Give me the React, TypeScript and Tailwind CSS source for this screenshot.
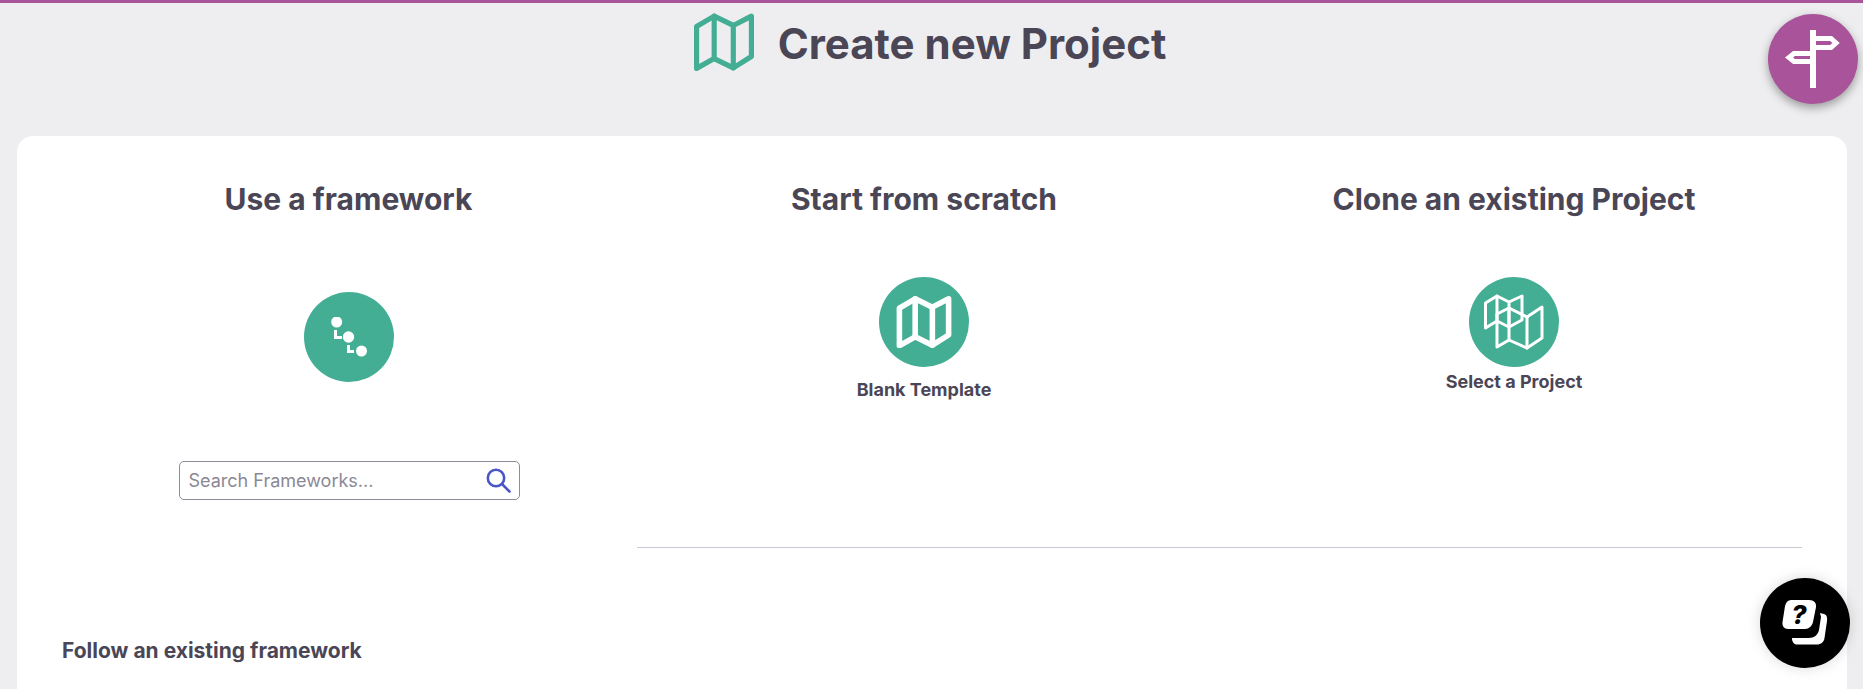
const MapGlyph = ({ className, width = 5 }: { className?: string; width?: number }) => (
  <svg viewBox="0 0 58 56" fill="none" stroke="currentColor" strokeWidth={width} strokeLinejoin="round" strokeLinecap="round" className={className}>
    <path d="M2.5 13 L19.5 3 L38 12 L55.5 3 V42 L38 53 L19.5 44 L2.5 53.5 Z" />
    <path d="M19.5 3 V44 M38 12 V53" />
  </svg>
)

const CloneGlyph = () => (
  <svg viewBox="0 0 60 56" fill="none" stroke="white" strokeWidth="3" strokeLinejoin="round" strokeLinecap="round" className="w-[60px] h-[56px]">
    <path d="M1.5 9 L13 2 L25 8 L38 2 V26 L25 33 L13 27 L1.5 34 Z" />
    <path d="M13 2 V27 M25 8 V33" />
    <path d="M13 20 L25 14 L43 23 L58 13 V44 L43 54 L25 46 L13 53 Z" />
    <path d="M25 14 V46 M43 23 V54" />
  </svg>
)

const FrameworkGlyph = () => (
  <svg viewBox="0 0 40 40" fill="white" className="w-10 h-10">
    <circle cx="7.7" cy="5" r="5.5" />
    <circle cx="19.5" cy="20" r="5.7" />
    <circle cx="32.5" cy="34" r="5.5" />
    <path d="M5 13 H8 V19 H13 V22 H5 Z" />
    <path d="M18 28 H21 V33 H25 V36 H18 Z" />
  </svg>
)

const SignpostGlyph = () => (
  <svg viewBox="0 0 60 60" fill="none" className="w-[60px] h-[60px]">
    <path d="M27 1 H33 V59 H27 Z" fill="white" />
    <path d="M33 9.5 H48 L53 14 L48 18.5 H33" stroke="white" strokeWidth="5" />
    <path d="M27 24.5 H11 L6 28.5 L11 32.5 H27" stroke="white" strokeWidth="5" />
  </svg>
)

const SearchGlyph = () => (
  <svg viewBox="0 0 25 25" fill="none" stroke="#4a55c8" strokeWidth="2.6" strokeLinecap="round" className="w-[25px] h-[25px]">
    <circle cx="10" cy="10" r="8.2" />
    <path d="M16 16 L23.5 23.5" />
  </svg>
)

const HelpGlyph = () => (
  <svg viewBox="0 0 46 46" className="w-[46px] h-[46px]">
    <path d="M38 13 L42 14 C45 15 45.5 18 45 21 L42.5 38 C42 42 39 44.5 35 44.5 L15 44.5 C12 44.5 10 42 10 38 L27 38 C32 38 36 35 37 30 L39 17 Z" fill="white" />
    <path d="M9 0 H27 C32 0 34.5 3 34 7 L31 22 C30 26 27 29 23 29 H6 C2 29 0 26 0.5 22 L3 6 C4 2 6 0 9 0 Z" fill="white" />
    <text x="17" y="24" textAnchor="middle" fontSize="26" fontWeight="800" fontStyle="italic" fill="black" fontFamily="Inter, sans-serif">?</text>
  </svg>
)

function Circle({ children }: { children: React.ReactNode }) {
  return <div className="w-[90px] h-[90px] rounded-full bg-[#43ae94] flex items-center justify-center">{children}</div>
}

export default function App() {
  return (
    <div className="relative h-screen overflow-hidden bg-[#eeeef0] border-t-[3px] border-[#a9549a] text-[#4a4656] font-['Inter',sans-serif]">
      <header className="h-[133px] flex justify-center">
        <div className="flex items-start gap-[24px] pt-[10px] pr-[3px]">
          <MapGlyph className="w-[60px] h-[58px] text-[#43ae94]" />
          <h1 className="text-[42px] leading-[44px] font-bold mt-[9px]">Create new Project</h1>
        </div>
      </header>

      <main className="ml-[17px] mr-[16px] h-[600px] bg-white rounded-[16px] px-[45px] pt-[46px]">
        <div className="grid grid-cols-[573px_1fr]">
          <section className="flex flex-col items-center">
            <h2 className="text-[30px] leading-[35px] font-bold">Use a framework</h2>
            <div className="mt-[75px]">
              <Circle><FrameworkGlyph /></Circle>
            </div>
            <div className="mt-[79px] ml-[1px] w-[341px] h-[39px] flex items-center justify-between rounded-[5px] border border-[#8e8c98] pl-[9px] pr-[8px]">
              <span className="text-[18px] text-[#8b8896]">Search Frameworks...</span>
              <SearchGlyph />
            </div>
          </section>

          <div className="ml-[2px] border-b border-[#c9cad1] h-[366px] grid grid-cols-[574px_1fr]">
            <section className="flex flex-col items-center">
              <h2 className="text-[30px] leading-[35px] font-bold">Start from scratch</h2>
              <div className="mt-[60px]">
                <Circle><MapGlyph className="w-[56px] h-[52px] text-white" width={6} /></Circle>
              </div>
              <span className="mt-[13px] text-[18px] leading-[20px] font-bold">Blank Template</span>
            </section>
            <section className="flex flex-col items-center pl-[15px]">
              <h2 className="text-[30px] leading-[35px] font-bold">Clone an existing Project</h2>
              <div className="mt-[60px]">
                <Circle><CloneGlyph /></Circle>
              </div>
              <span className="mt-[5px] text-[18px] leading-[20px] font-bold">Select a Project</span>
            </section>
          </div>
        </div>
        <h3 className="mt-[90px] text-[21px] leading-[26px] font-bold">Follow an existing framework</h3>
      </main>

      <button className="absolute left-[1768px] top-[11px] w-[90px] h-[90px] rounded-full bg-[#a9549a] shadow-[0_4px_10px_rgba(0,0,0,0.35)] flex items-center justify-center">
        <SignpostGlyph />
      </button>
      <button className="absolute left-[1760px] top-[575px] w-[90px] h-[90px] rounded-full bg-black flex items-center justify-center shadow-[0_0_14px_rgba(0,0,0,0.15)]">
        <HelpGlyph />
      </button>
    </div>
  )
}
